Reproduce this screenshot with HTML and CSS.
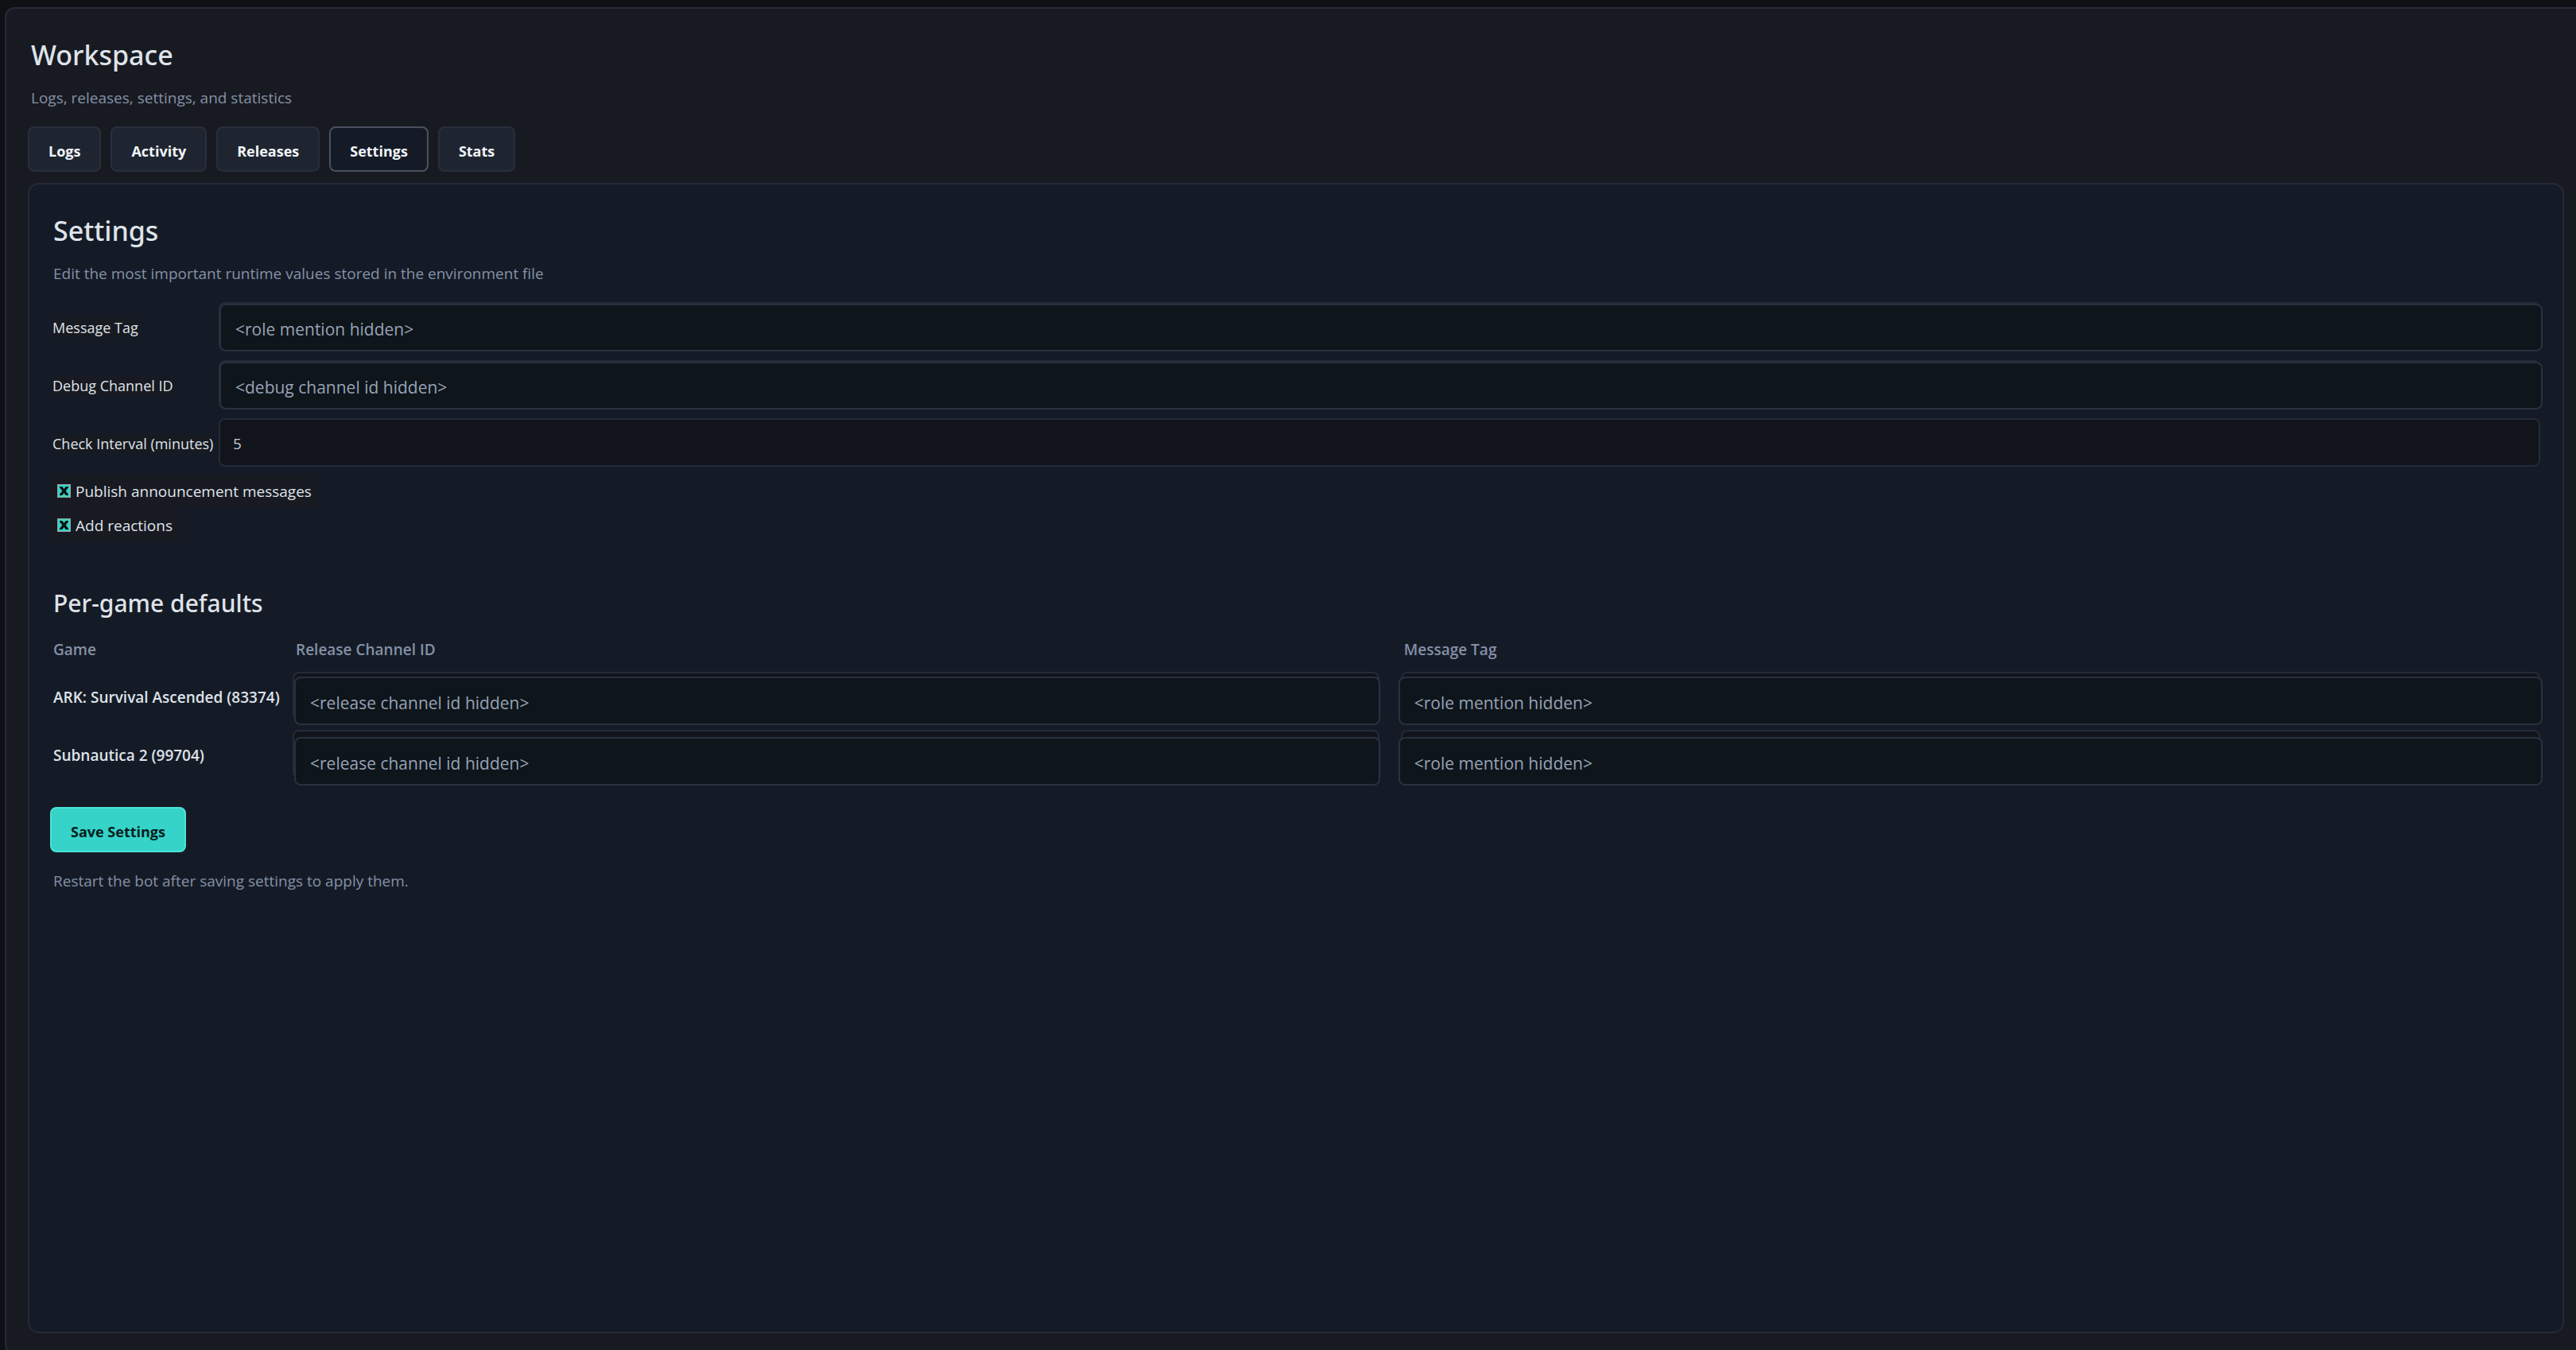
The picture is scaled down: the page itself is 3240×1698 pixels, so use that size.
FILE: index.html
```html
<!DOCTYPE html>
<html lang="en">
<head>
  <meta charset="UTF-8">
  <meta name="viewport" content="width=device-width, initial-scale=1.0">
  <title>Workspace - Settings</title>
  <link rel="stylesheet" href="styles.css">
</head>
<body>
  <main class="workspace">
    <header class="workspace-header">
      <h1>Workspace</h1>
      <p class="muted">Logs, releases, settings, and statistics</p>
    </header>

    <nav class="tabs">
      <button type="button" class="tab">Logs</button>
      <button type="button" class="tab">Activity</button>
      <button type="button" class="tab">Releases</button>
      <button type="button" class="tab active">Settings</button>
      <button type="button" class="tab">Stats</button>
    </nav>

    <form class="panel">
      <h2>Settings</h2>
      <p class="muted intro">Edit the most important runtime values stored in the environment file</p>

      <div class="form-row">
        <label for="message-tag"><span>Message Tag</span></label>
        <div class="field"><input class="masked" id="message-tag" type="text" value="&lt;role mention hidden&gt;"></div>
      </div>
      <div class="form-row">
        <label for="debug-channel"><span>Debug Channel ID</span></label>
        <div class="field"><input class="masked" id="debug-channel" type="text" value="&lt;debug channel id hidden&gt;"></div>
      </div>
      <div class="form-row">
        <label for="interval"><span>Check Interval (minutes)</span></label>
        <div class="field"><input class="plain" id="interval" type="text" value="5"></div>
      </div>

      <div class="checks">
        <label class="check"><input type="checkbox" checked>Publish announcement messages</label>
        <label class="check"><input type="checkbox" checked>Add reactions</label>
      </div>

      <h3>Per-game defaults</h3>
      <table class="games">
        <thead>
          <tr>
            <th class="col-game">Game</th>
            <th class="col-channel">Release Channel ID</th>
            <th class="col-tag">Message Tag</th>
          </tr>
        </thead>
        <tbody>
          <tr>
            <td class="game">ARK: Survival Ascended (83374)</td>
            <td class="channel"><div class="field"><input class="masked" type="text" aria-label="Release channel for ARK" value="&lt;release channel id hidden&gt;"></div></td>
            <td><div class="field"><input class="masked" type="text" aria-label="Message tag for ARK" value="&lt;role mention hidden&gt;"></div></td>
          </tr>
          <tr>
            <td class="game">Subnautica 2 (99704)</td>
            <td class="channel"><div class="field"><input class="masked" type="text" aria-label="Release channel for Subnautica 2" value="&lt;release channel id hidden&gt;"></div></td>
            <td><div class="field"><input class="masked" type="text" aria-label="Message tag for Subnautica 2" value="&lt;role mention hidden&gt;"></div></td>
          </tr>
        </tbody>
      </table>

      <button type="button" class="save">Save Settings</button>
      <p class="muted">Restart the bot after saving settings to apply them.</p>
    </form>
  </main>
</body>
</html>
```
FILE: styles.css
```css
* {
  box-sizing: border-box;
}

body {
  margin: 0;
  height: 100vh;
  overflow: hidden;
  background-color: #0f1014;
  color: #dfe3ea;
  font-family: "Open Sans", "Noto Sans", sans-serif;
  font-size: 19px;
  line-height: 28px;
}

h1, h2, h3, p {
  margin: 0;
}

h1, h2, h3 {
  font-family: "Noto Sans", "Open Sans", sans-serif;
  font-weight: 500;
}

h1, h2 {
  font-size: 34px;
  line-height: 48px;
}

h3 {
  font-size: 30px;
  line-height: 44px;
}

.muted {
  color: #8491a6;
}

/* runs past the right and bottom edge of the window */
.workspace {
  display: flex;
  flex-direction: column;
  height: calc(100vh - 4px);
  margin: 9px -12px 0 6px;
  padding: 34px 25px 24px 27px;
  background-color: #181a21;
  border: 2px solid #242a38;
  border-radius: 12px;
}

.workspace-header {
  padding: 0 4px;
}

.workspace-header .muted {
  margin-top: 16px;
}

.tabs {
  display: flex;
  gap: 12px;
  margin: 22px 0 14px;
}

.tab,
.save {
  height: 57px;
  padding: 4px 24px 0;
  border: 2px solid #282e3b;
  border-radius: 8px;
  background-color: #1f2530;
  color: #f1f4f9;
  font: inherit;
  font-size: 18px;
  font-weight: 700;
}

.tab.active {
  background-color: #151b26;
  border-color: #495160;
}

.panel {
  flex: 1;
  padding: 34px 28px 34px 26px;
  background-color: #151b26;
  border: 2px solid #242a38;
  border-radius: 14px;
}

.panel h2,
.panel h3,
.panel .muted {
  padding-left: 4px;
}

.intro {
  margin: 16px 0 22px;
}

.form-row {
  display: flex;
  margin-bottom: 12px;
}

.form-row label {
  width: 212px;
  padding: 18px 0 0 3px;
  font-size: 18px;
  white-space: nowrap;
}

.form-row label span {
  background-color: #181a21;
}

.field {
  display: flex;
  flex: 1;
  height: 61px;
  background-color: #11141b;
  border: 2px solid #242a38;
  border-radius: 8px;
}

.field input {
  flex: 1;
  min-width: 0;
  font: inherit;
  outline: none;
}

.field .plain {
  padding: 2px 16px 0;
  border: 0;
  background: none;
  color: #c6cbd4;
}

/* the mask lies slightly off the field under it */
.field .masked {
  margin: 0 -5px -3px -1px;
  padding: 4px 18px 0;
  border: 2px solid #2b303f;
  border-radius: 8px;
  background-color: #0e151b;
  color: #98a2b5;
  font-size: 21px;
}

.checks {
  margin-top: -3px;
  padding: 0 0 55px 1px;
}

.check {
  display: flex;
  align-items: center;
  gap: 6px;
  width: fit-content;
  height: 43px;
  padding: 0 8px;
  background-color: #181a21;
}

.check input {
  appearance: none;
  width: 17px;
  height: 17px;
  margin: 0;
  border: 1px solid #a39f9b;
  background-color: #35d3c8;
}

.check input:checked::before {
  content: "";
  display: block;
  width: 11px;
  height: 11px;
  margin: 2px;
  background-color: #05100f;
  clip-path: polygon(0 0, 30% 0, 50% 28%, 70% 0, 100% 0, 100% 12%, 70% 50%, 100% 88%, 100% 100%, 70% 100%, 50% 72%, 30% 100%, 0 100%, 0 88%, 30% 50%, 0 12%);
}

.games {
  width: 100%;
  margin: 22px 0 12px;
  table-layout: fixed;
  border-collapse: collapse;
}

.games th,
.games td {
  padding: 0;
  text-align: left;
  vertical-align: top;
}

.games th {
  height: 42px;
  padding-left: 4px;
  color: #8491a6;
  font-weight: 600;
}

.games td {
  height: 73px;
}

.games .col-game {
  width: 305px;
}

.games .col-channel {
  width: 44.5%;
}

.games .game {
  padding: 18px 0 0 4px;
  font-weight: 600;
  white-space: nowrap;
}

.games .channel {
  padding-right: 27px;
}

.games .masked {
  margin: 4px -5px -8px -5px;
}

.games .channel .masked {
  margin-left: 0;
  margin-right: -3px;
}

.games tr + tr .masked {
  margin-top: 7px;
  margin-bottom: -11px;
}

.save {
  margin: 12px 0 22px;
  background-color: #35d3c8;
  border-color: #4be3d8;
  color: #06201e;
}
```
